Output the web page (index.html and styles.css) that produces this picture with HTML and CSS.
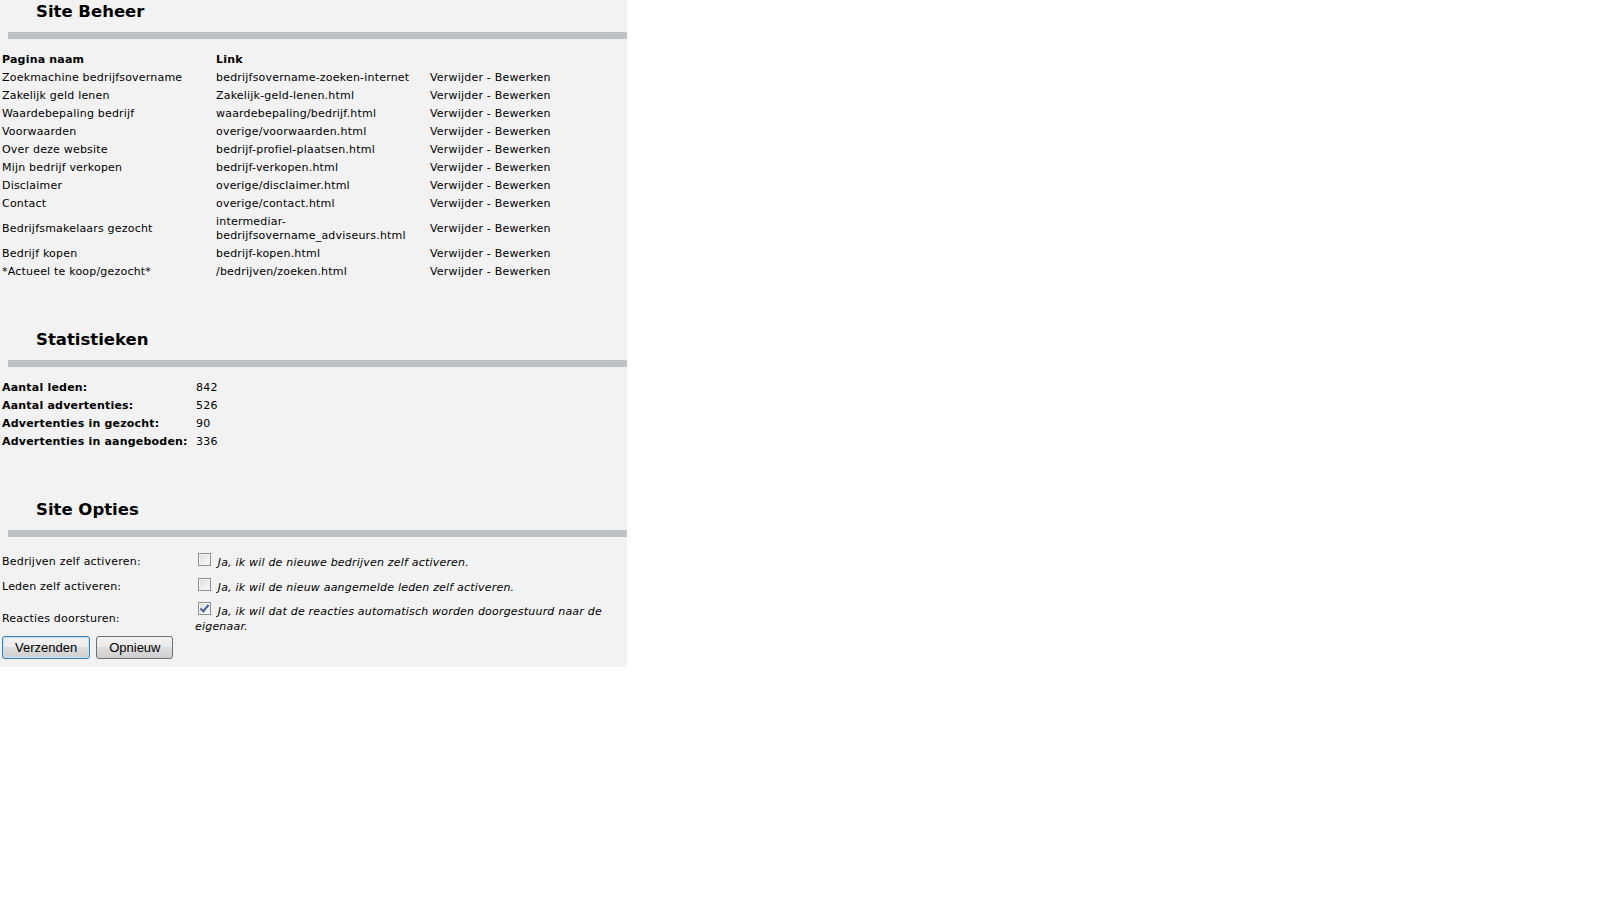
FILE: index.html
```html
<!DOCTYPE html>
<html lang="nl">
<head>
  <meta charset="UTF-8">
  <title>Site Beheer</title>
  <link rel="stylesheet" href="styles.css">
</head>
<body>
  <div class="panel">
    <h2 class="section-title">Site Beheer</h2>
    <div class="bar"></div>
    <table class="pages">
      <tr>
        <th class="col-name">Pagina naam</th>
        <th class="col-link">Link</th>
        <th></th>
      </tr>
      <tr><td>Zoekmachine bedrijfsovername</td><td>bedrijfsovername-zoeken-internet</td><td>Verwijder - Bewerken</td></tr>
      <tr><td>Zakelijk geld lenen</td><td>Zakelijk-geld-lenen.html</td><td>Verwijder - Bewerken</td></tr>
      <tr><td>Waardebepaling bedrijf</td><td>waardebepaling/bedrijf.html</td><td>Verwijder - Bewerken</td></tr>
      <tr><td>Voorwaarden</td><td>overige/voorwaarden.html</td><td>Verwijder - Bewerken</td></tr>
      <tr><td>Over deze website</td><td>bedrijf-profiel-plaatsen.html</td><td>Verwijder - Bewerken</td></tr>
      <tr><td>Mijn bedrijf verkopen</td><td>bedrijf-verkopen.html</td><td>Verwijder - Bewerken</td></tr>
      <tr><td>Disclaimer</td><td>overige/disclaimer.html</td><td>Verwijder - Bewerken</td></tr>
      <tr><td>Contact</td><td>overige/contact.html</td><td>Verwijder - Bewerken</td></tr>
      <tr><td>Bedrijfsmakelaars gezocht</td><td>intermediar-<br>bedrijfsovername_adviseurs.html</td><td>Verwijder - Bewerken</td></tr>
      <tr><td>Bedrijf kopen</td><td>bedrijf-kopen.html</td><td>Verwijder - Bewerken</td></tr>
      <tr><td>*Actueel te koop/gezocht*</td><td>/bedrijven/zoeken.html</td><td>Verwijder - Bewerken</td></tr>
    </table>

    <h2 class="section-title spaced">Statistieken</h2>
    <div class="bar"></div>
    <table class="stats">
      <tr><th>Aantal leden:</th><td>842</td></tr>
      <tr><th>Aantal advertenties:</th><td>526</td></tr>
      <tr><th>Advertenties in gezocht:</th><td>90</td></tr>
      <tr><th>Advertenties in aangeboden:</th><td>336</td></tr>
    </table>

    <form class="options" onsubmit="return false">
      <h2 class="section-title spaced">Site Opties</h2>
      <div class="bar"></div>
      <table class="opts">
        <tr>
          <td class="opt-label">Bedrijven zelf activeren:</td>
          <td class="opt-value"><input type="checkbox" id="optBedrijven"> <label for="optBedrijven">Ja, ik wil de nieuwe bedrijven zelf activeren.</label></td>
        </tr>
        <tr>
          <td class="opt-label">Leden zelf activeren:</td>
          <td class="opt-value"><input type="checkbox" id="optLeden"> <label for="optLeden">Ja, ik wil de nieuw aangemelde leden zelf activeren.</label></td>
        </tr>
        <tr>
          <td class="opt-label">Reacties doorsturen:</td>
          <td class="opt-value"><input type="checkbox" id="optReacties" checked> <label for="optReacties">Ja, ik wil dat de reacties automatisch worden doorgestuurd naar de eigenaar.</label></td>
        </tr>
      </table>
      <div class="button-row">
        <button type="submit" class="btn btn-default">Verzenden</button>
        <button type="reset" class="btn">Opnieuw</button>
      </div>
    </form>
  </div>
</body>
</html>
```

FILE: styles.css
```css
body {
  margin: 0;
  background-color: #fff;
  color: #000;
  font-family: "DejaVu Sans", Verdana, sans-serif;
  font-size: 11px;
  letter-spacing: 0.2px;
}
.panel {
  width: 627px;
  background-color: #f2f2f2;
  padding: 1px 0 8px 0;
}
.section-title {
  margin: 0;
  padding-left: 36px;
  font-size: 16.5px;
  line-height: 22px;
  font-weight: bold;
  letter-spacing: 0;
}
.section-title.spaced {
  margin-top: 48px;
}
.bar {
  height: 7px;
  margin: 9px 0 12px 8px;
  background-color: #bec2c5;
}
table {
  border-collapse: collapse;
}
th, td {
  padding: 2px;
  line-height: 14px;
  text-align: left;
  vertical-align: middle;
}
.pages {
  width: 627px;
  table-layout: fixed;
}
.pages .col-name, .pages .col-link {
  width: 210px;
}
.stats th {
  width: 190px;
}
.opts {
  width: 627px;
  margin-top: 9px;
}
.opt-label, .opt-value {
  padding: 4px 2px;
  line-height: 15px;
}
.opts tr:last-child td {
  padding-top: 3px;
  padding-bottom: 2px;
}
.opt-label {
  width: 189px;
}
.opt-value {
  font-style: italic;
}
.opt-value input[type="checkbox"] {
  -webkit-appearance: none;
  appearance: none;
  width: 13px;
  height: 13px;
  margin: 0 3px 0 3px;
  border: 1px solid #8f8f8f;
  background: linear-gradient(135deg, #dcdcdc, #fbfbfb);
  box-shadow: inset 0 0 0 1px #f4f4f4;
  vertical-align: 0;
  position: relative;
}
.opt-value input[type="checkbox"]:checked::after {
  content: "";
  position: absolute;
  left: 3px;
  top: 0px;
  width: 3px;
  height: 7px;
  border: solid #4a5f97;
  border-width: 0 2px 2px 0;
  transform: rotate(40deg);
}
.button-row {
  display: flex;
  gap: 6px;
  padding-left: 2px;
}
.btn {
  font-family: "Liberation Sans", Arial, sans-serif;
  font-size: 13px;
  height: 23px;
  padding: 0 12px;
  color: #000;
  border: 1px solid #707070;
  border-radius: 3px;
  background: linear-gradient(#f2f2f2, #ebebeb 50%, #dddddd 50%, #cfcfcf);
}
.btn-default {
  border-color: #3c7fb1;
  box-shadow: inset 0 0 0 1px #bfe3f8;
}
```
